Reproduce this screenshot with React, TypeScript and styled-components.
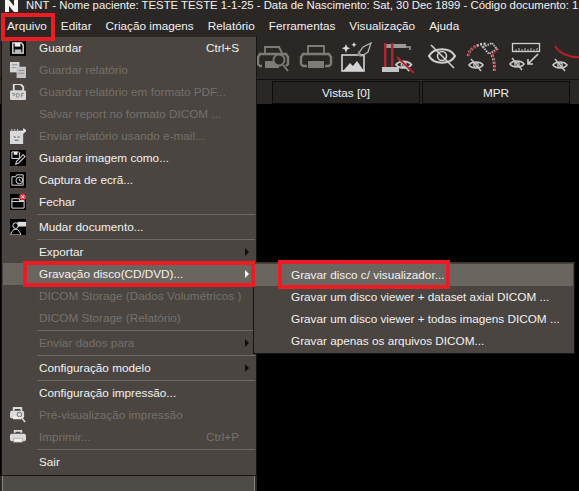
import styled, { createGlobalStyle } from "styled-components";

const GlobalStyle = createGlobalStyle`
  html, body {
    margin: 0;
    padding: 0;
    background: #000;
  }
  body {
    font-family: "Liberation Sans", "Noto Sans", sans-serif;
    font-size: 11.75px;
    color: #f2f2f2;
  }
`;

const Win = styled.div`
  position: relative;
  width: 579px;
  height: 491px;
  overflow: hidden;
  display: flex;
  flex-direction: column;
  background: #000;
`;

const TitleBar = styled.div`
  height: 15px;
  display: flex;
  align-items: flex-start;
  gap: 8px;
  padding-left: 5px;
  background: #2b2725;
  white-space: nowrap;
  overflow: hidden;
  font-size: 11.35px;
  line-height: 11px;
`;

const Logo = styled.svg`
  flex: none;
  width: 13px;
  height: 12px;
`;

const MenuBar = styled.div`
  height: 21px;
  display: flex;
  align-items: center;
  gap: 14px;
  padding-left: 7px;
  background: #2b2725;
  white-space: nowrap;
`;

const Toolbar = styled.div`
  height: 43px;
  display: flex;
  padding-left: 253px;
  background: #2b2725;
  border-bottom: 1px solid #111;
  overflow: hidden;
`;

const ToolCell = styled.svg`
  flex: none;
  width: 42px;
  height: 44px;
`;

const TabStrip = styled.div`
  height: 24px;
  display: flex;
  gap: 2px;
  padding: 1px 0 0 272px;
  box-sizing: border-box;
  background: #2b2725;
`;

const Tab = styled.div`
  width: 148px;
  display: flex;
  align-items: center;
  justify-content: center;
  background: #262422;
  border: 1px solid #0c0c0c;
  box-sizing: border-box;
`;

const Viewport = styled.div`
  flex: 1;
  background: #000;
`;

const FooterPanel = styled.div`
  position: absolute;
  left: 2px;
  top: 476px;
  width: 251px;
  height: 15px;
  background: #4f4c47;
  border-left: 1px solid #8a8782;
  border-right: 1px solid #8a8782;
  box-shadow: -2px 0 0 #2b2725, 2px 0 0 #2b2725;
`;

const Menu = styled.div`
  position: absolute;
  left: 1px;
  top: 36px;
  width: 256px;
  height: 440px;
  box-sizing: border-box;
  background: #4a4540;
  border: 1px solid #161412;
  border-top-color: #2b2725;
`;

const Row = styled.div<{ $disabled?: boolean; $active?: boolean }>`
  height: 22px;
  box-sizing: border-box;
  display: grid;
  grid-template-columns: 36px 1fr auto 10px;
  align-items: center;
  margin-left: 1px;
  padding: 0 7px 1px 0;
  color: ${(p) => (p.$disabled ? "#75716c" : "#f2f2f2")};
  background: ${(p) => (p.$active ? "#6a655f" : "transparent")};
  white-space: nowrap;
`;

const IconSlot = styled.span`
  display: flex;
  padding-left: 7px;
`;

const Arrow = styled.span<{ $light?: boolean }>`
  justify-self: end;
  width: 0;
  height: 0;
  border-left: 4px solid ${(p) => (p.$light ? "#fff" : "#0e0e0e")};
  border-top: 4px solid transparent;
  border-bottom: 4px solid transparent;
`;

const Sep = styled.div`
  height: 1px;
  margin: 1px 1px 1px 35px;
  background: #6d6964;
`;

const SubMenu = styled.div`
  position: absolute;
  left: 253px;
  top: 262px;
  width: 322px;
  height: 92px;
  box-sizing: border-box;
  padding: 1px 0 0 1px;
  background: #4a4540;
  border: 1px solid #161412;
  border-top-color: #3a3733;
`;

const SubRow = styled.div<{ $active?: boolean }>`
  height: 22px;
  box-sizing: border-box;
  display: flex;
  align-items: center;
  padding: 0 0 1px 36px;
  margin-right: 1px;
  white-space: nowrap;
  background: ${(p) => (p.$active ? "#6a655f" : "transparent")};
`;

const Callout = styled.div<{ $x: number; $y: number; $w: number; $h: number }>`
  position: absolute;
  left: ${(p) => p.$x}px;
  top: ${(p) => p.$y}px;
  width: ${(p) => p.$w}px;
  height: ${(p) => p.$h}px;
  box-sizing: border-box;
  border: 4px solid #ed1c24;
`;

const IconBox = styled.svg`
  display: block;
  width: 16px;
  height: 16px;
`;

type IconName = "save" | "copy" | "pdf" | "mail" | "saveAs" | "camera" | "close" | "switch" | "preview" | "print";

function ItemIcon({ name }: { name: IconName }) {
  switch (name) {
    case "save":
      return (
        <IconBox viewBox="0 0 17 17">
          <rect width="17" height="17" fill="#000" />
          <path d="M3 3h9l2 2v9H3z" fill="none" stroke="#eee" strokeWidth="1.4" />
          <rect x="5" y="3" width="6" height="4" fill="#eee" />
          <rect x="5" y="10" width="7" height="4" fill="#bbb" />
        </IconBox>
      );
    case "copy":
      return (
        <IconBox viewBox="0 0 17 17">
          <rect x="0" y="0" width="10" height="11" fill="#d5d5d5" />
          <rect x="7" y="5" width="10" height="12" fill="#c4c4c4" />
          <path d="M2 3h6M2 6h4M9 9h6M9 12h6" stroke="#8d8d8d" strokeWidth="1" />
        </IconBox>
      );
    case "pdf":
      return (
        <IconBox viewBox="0 0 17 17">
          <path d="M4 0h7l3 3v5H4z" fill="none" stroke="#dcdcdc" strokeWidth="2" />
          <rect x="0" y="7" width="17" height="10" rx="1" fill="#d8d8d8" />
          <path d="M2 10h3v2H3M7 10v4M7 10h2l1 2-1 2H7M12 14v-4h3M12 12h2" fill="none" stroke="#8a8a8a" strokeWidth="1" />
        </IconBox>
      );
    case "mail":
      return (
        <IconBox viewBox="0 0 17 17">
          <rect x="0" y="3" width="14" height="14" fill="#d8d8d8" />
          <path d="M9 3h5V0l4 3-4 3z" fill="#e6e6e6" />
          <path d="M2 3v-2M5 3v-2M8 3v-2" stroke="#d8d8d8" />
          <path d="M4 9l2 1M10 9l-2 1M5 13h4" stroke="#666" strokeWidth="1.2" />
        </IconBox>
      );
    case "saveAs":
      return (
        <IconBox viewBox="0 0 17 17">
          <rect width="17" height="17" fill="#000" />
          <path d="M2 2h7l1 1v6H2z" fill="none" stroke="#eee" />
          <rect x="4" y="2" width="4" height="3" fill="#eee" />
          <path d="M6 15l1-3 7-7 2 2-7 7z" fill="none" stroke="#ccc" strokeWidth="1.2" />
        </IconBox>
      );
    case "camera":
      return (
        <IconBox viewBox="0 0 17 17">
          <rect width="17" height="17" fill="#000" />
          <path d="M2 5h4l1-2h7v11H2z" fill="none" stroke="#e4e4e4" />
          <circle cx="10" cy="9" r="3.6" fill="none" stroke="#e4e4e4" />
          <path d="M10 7v2l2 1" stroke="#e4e4e4" fill="none" />
        </IconBox>
      );
    case "close":
      return (
        <IconBox viewBox="0 0 17 17">
          <rect width="17" height="17" fill="#000" />
          <path d="M2 5h8v2h5v8H2zM2 8h13" fill="none" stroke="#e8e8e8" />
          <rect x="10" y="0" width="7" height="6" rx="2" fill="#f03a4c" />
          <path d="M12 1.5l3 3M15 1.5l-3 3" stroke="#fff" />
        </IconBox>
      );
    case "switch":
      return (
        <IconBox viewBox="0 0 17 17">
          <rect width="17" height="17" fill="#000" />
          <circle cx="6" cy="7" r="3" fill="none" stroke="#eee" />
          <path d="M1 17v-2l3-4h4l3 4v2z" fill="none" stroke="#eee" />
          <rect x="8" y="3" width="9" height="5" fill="#ddd" />
        </IconBox>
      );
    case "preview":
      return (
        <IconBox viewBox="0 0 17 17">
          <path d="M4 4V1h8v3" fill="none" stroke="#ddd" strokeWidth="2" />
          <rect x="0" y="4" width="15" height="8" rx="2" fill="#dadada" />
          <rect x="3" y="10" width="9" height="3" fill="#eee" />
          <circle cx="10" cy="8" r="2.4" fill="none" stroke="#6b6b6b" />
          <path d="M12 11l4 5" stroke="#ddd" strokeWidth="1.6" />
        </IconBox>
      );
    case "print":
      return (
        <IconBox viewBox="0 0 17 17">
          <path d="M5 4V2h7v2" fill="none" stroke="#ddd" strokeWidth="2" />
          <rect x="0" y="5" width="17" height="8" rx="2" fill="#dadada" />
          <rect x="4" y="10" width="9" height="4" fill="#f0f0f0" stroke="#999" strokeWidth=".6" />
        </IconBox>
      );
  }
}

function SmallEye({ x, y, s = 1, c = "#c9c9c9" }: { x: number; y: number; s?: number; c?: string }) {
  return (
    <g transform={`translate(${x} ${y}) scale(${s})`}>
      <path d="M0 6c3-4 11-4 14 0-3 4-11 4-14 0z" fill="none" stroke={c} strokeWidth="1.6" />
      <circle cx="7" cy="6" r="2.2" fill="none" stroke={c} strokeWidth="1.2" />
      <path d="M2 0l10 12" stroke={c} strokeWidth="1.4" />
    </g>
  );
}

function ToolIcons() {
  const grey = "#7f7c78";
  return (
    <>
      <ToolCell viewBox="0 0 42 44">
        <path d="M12 17v-6h14l3 6" fill="none" stroke={grey} strokeWidth="1.800" />
        <path d="M9 30H7l-2-2v-7l2-3h26l2 3v7l-2 2" fill="none" stroke={grey} strokeWidth="2.400" />
        <rect x="12" y="25" width="14" height="7" fill={grey} />
        <circle cx="26" cy="24" r="5.500" fill="#2b2725" stroke={grey} strokeWidth="1.800" />
        <path d="M30 29l5 6" stroke={grey} strokeWidth="1.800" />
      </ToolCell>
      <ToolCell viewBox="0 0 42 44">
        <path d="M13 18v-8h16v8" fill="none" stroke={grey} strokeWidth="1.800" />
        <path d="M12 30H8l-2-2v-7l2-3h26l2 3v7l-2 2h-4" fill="none" stroke={grey} strokeWidth="2.400" />
        <rect x="13" y="25" width="16" height="7" fill={grey} />
      </ToolCell>
      <ToolCell viewBox="0 0 42 44">
        <rect x="5" y="19" width="22" height="16" fill="none" stroke="#d4d4d4" strokeWidth="1.600" />
        <path d="M6 35l7-8 3 3 4-5 7 10z" fill="#d4d4d4" />
        <path d="M9 8l1.200 3 3 1.200-3 1.200L9 17l-1.200-3.600-3-1.200 3-1.200zM17 6l.8 2 2 .8-2 .8-.8 2-.8-2-2-.8 2-.8z" fill="#d8d8d8" />
        <path d="M34 7l-8 4-4 6 3 3 6-4z" fill="none" stroke="#b8b8b8" strokeWidth="1.200" />
        <path d="M22 14l-2 5 4 2" fill="#8f8f8f" />
      </ToolCell>
      <ToolCell viewBox="0 0 42 44">
        <path d="M5 8h22v4H5z" fill="#9a9a9a" />
        <rect x="5" y="7" width="2.500" height="25" fill="#a92733" />
        <rect x="12" y="7" width="2.500" height="25" fill="#a92733" />
        <path d="M3 36h17v-5H3z" fill="#c4c4c4" />
        <path d="M20 11h11v3" fill="none" stroke="#9a9a9a" strokeWidth="1.500" />
        <SmallEye x={17} y={22} s={1.100} />
        <path d="M18 21l17 16" stroke="#b4202b" strokeWidth="1.800" />
      </ToolCell>
      <ToolCell viewBox="0 0 42 44">
        <path d="M8 20c5-9 21-9 26 0-5 9-21 9-26 0z" fill="none" stroke="#cfcfcf" strokeWidth="2.200" />
        <circle cx="21" cy="20" r="4.500" fill="none" stroke="#cfcfcf" strokeWidth="1.600" />
        <path d="M10 9l23 23" stroke="#cfcfcf" strokeWidth="1.600" />
      </ToolCell>
      <ToolCell viewBox="0 0 42 44">
        <path d="M5 20c1-7 10-13 19-12" fill="none" stroke="#c7c7c7" strokeWidth="2.600" strokeDasharray="2 1.500" />
        <path d="M5 20c1-5 5-9 9-10" fill="none" stroke="#a92733" strokeWidth="1.400" />
        <path d="M20 11l9-4 5 6-8 5z" fill="none" stroke="#bdbdbd" strokeWidth="2" strokeDasharray="1.500 1" />
        <path d="M34 14l-5 5" stroke="#b4202b" strokeWidth="1.500" />
        <path d="M29 19c2 5 3 11 2 16" fill="none" stroke="#cfcfcf" strokeWidth="2.600" strokeDasharray="2 1.500" />
        <path d="M29 19c2 5 3 11 2 16" fill="none" stroke="#a92733" strokeWidth="1" />
        <SmallEye x={6} y={23} />
      </ToolCell>
      <ToolCell viewBox="0 0 42 44">
        <rect x="7.500" y="7.500" width="27" height="8" fill="none" stroke="#cfcfcf" strokeWidth="1.300" />
        <path d="M11 15v-2M14 15v-3M17 15v-2M20 15v-3M23 15v-2M26 15v-3M29 15v-2M32 15v-3" stroke="#bcbcbc" />
        <path d="M33 18L23 28M23 23v5h5" fill="none" stroke="#cfcfcf" strokeWidth="1.600" />
        <SmallEye x={5} y={22} />
      </ToolCell>
      <ToolCell viewBox="0 0 42 44">
        <path d="M8 10c4 7 14 12 26 11" fill="none" stroke="#b4202b" strokeWidth="2" />
        <SmallEye x={6} y={23} />
      </ToolCell>
    </>
  );
}

type Entry =
  | { sep: true }
  | { label: string; icon?: IconName; shortcut?: string; disabled?: boolean; arrow?: boolean; active?: boolean };

const menuItems: Entry[] = [
  { label: "Guardar", icon: "save", shortcut: "Ctrl+S" },
  { label: "Guardar relatório", icon: "copy", disabled: true },
  { label: "Guardar relatório em formato PDF...", icon: "pdf", disabled: true },
  { label: "Salvar report no formato DICOM ...", disabled: true },
  { label: "Enviar relatório usando e-mail...", icon: "mail", disabled: true },
  { label: "Guardar imagem como...", icon: "saveAs" },
  { label: "Captura de ecrã...", icon: "camera" },
  { label: "Fechar", icon: "close" },
  { sep: true },
  { label: "Mudar documento...", icon: "switch" },
  { sep: true },
  { label: "Exportar", arrow: true },
  { label: "Gravação disco(CD/DVD)...", arrow: true, active: true },
  { label: "DICOM Storage (Dados Volumétricos )", disabled: true },
  { label: "DICOM Storage (Relatório)", disabled: true },
  { sep: true },
  { label: "Enviar dados para", disabled: true, arrow: true },
  { sep: true },
  { label: "Configuração modelo", arrow: true },
  { sep: true },
  { label: "Configuração impressão..." },
  { label: "Pré-visualização impressão", icon: "preview", disabled: true },
  { label: "Imprimir...", icon: "print", shortcut: "Ctrl+P", disabled: true },
  { sep: true },
  { label: "Sair" },
];

const burnItems = [
  "Gravar disco c/ visualizador...",
  "Gravar um disco viewer + dataset axial DICOM ...",
  "Gravar um disco viewer + todas imagens DICOM ...",
  "Gravar apenas os arquivos DICOM...",
];

const topMenus = ["Arquivo", "Editar", "Criação imagens", "Relatório", "Ferramentas", "Visualização", "Ajuda"];

export default function App() {
  return (
    <Win>
      <GlobalStyle />
      <TitleBar>
        <Logo viewBox="0 0 13 12">
          <path d="M0 0h4l5 6V0h4v12H9L4 6v6H0z" fill="#f4f4f4" />
        </Logo>
        <span>NNT - Nome paciente: TESTE TESTE 1-1-25 - Data de Nascimento: Sat, 30 Dec 1899 - Código documento: 1</span>
      </TitleBar>
      <MenuBar>
        {topMenus.map((m) => (
          <span key={m}>{m}</span>
        ))}
      </MenuBar>
      <Toolbar>
        <ToolIcons />
      </Toolbar>
      <TabStrip>
        <Tab>Vistas [0]</Tab>
        <Tab>MPR</Tab>
      </TabStrip>
      <Viewport />
      <FooterPanel />

      <Menu>
        {menuItems.map((item, i) =>
          "sep" in item ? (
            <Sep key={i} />
          ) : (
            <Row key={item.label} $disabled={item.disabled} $active={item.active}>
              <IconSlot>{item.icon && <ItemIcon name={item.icon} />}</IconSlot>
              <span>{item.label}</span>
              <span>{item.shortcut}</span>
              {item.arrow ? <Arrow $light={item.active} /> : <span />}
            </Row>
          )
        )}
      </Menu>

      <SubMenu>
        {burnItems.map((label, i) => (
          <SubRow key={label} $active={i === 0}>
            {label}
          </SubRow>
        ))}
      </SubMenu>

      <Callout $x={1} $y={13} $w={54} $h={28} />
      <Callout $x={23} $y={261} $w={232} $h={26} />
      <Callout $x={278} $y={260} $w={172} $h={29} />
    </Win>
  );
}
